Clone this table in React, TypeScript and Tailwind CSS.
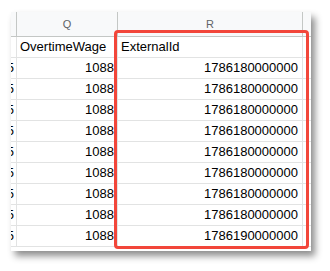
import React from 'react';

const rows = [
  '1786180000000',
  '1786180000000',
  '1786180000000',
  '1786180000000',
  '1786180000000',
  '1786180000000',
  '1786180000000',
  '1786180000000',
  '1786190000000',
];

const cell = 'border-r border-b border-[#e2e3e3] h-[21px] flex items-center overflow-hidden';

const App = () => {
  return (
    <div className="w-[330px] h-[271px] bg-white pl-[11px] pt-[12px] font-['Liberation_Sans',Arial,sans-serif]">
      <div className="relative w-[300px] h-[239px] bg-white shadow-[4px_5px_7px_rgba(0,0,0,0.45)]">
        <div className="w-full h-full overflow-hidden grid grid-cols-[6px_101px_185px_9px] auto-rows-min">
          {/* column letters */}
          <div className="h-[25px] bg-[#f8f9fa] border-r border-b border-[#c4c7c5]"></div>
          <div className="h-[25px] bg-[#f8f9fa] border-r border-b border-[#c4c7c5] flex items-center justify-center text-[11px] text-[#5f6368]">Q</div>
          <div className="h-[25px] bg-[#f8f9fa] border-r border-b border-[#c4c7c5] flex items-center justify-center text-[11px] text-[#5f6368]">R</div>
          <div className="h-[25px] bg-[#f8f9fa] border-b border-[#c4c7c5]"></div>

          {/* field names */}
          <div className={cell}></div>
          <div className={`${cell} pl-[3px] text-[13px] text-black`}>OvertimeWage</div>
          <div className={`${cell} pl-[3px] text-[13px] text-black`}>ExternalId</div>
          <div className={cell}></div>

          {rows.map((id, i) => (
            <React.Fragment key={i}>
              <div className={`${cell} justify-end pr-[2px] text-[13px] text-black`}>
                <span className="shrink-0">5</span>
              </div>
              <div className={`${cell} justify-end pr-[3px] text-[13px] text-black`}>1088</div>
              <div className={`${cell} justify-end pr-[4px] text-[13px] text-black`}>{id}</div>
              <div className={cell}></div>
            </React.Fragment>
          ))}
        </div>

        {/* highlight box */}
        <div className="absolute left-[103px] top-[18px] w-[195px] h-[219px] border-[3px] border-[#f2463a] rounded-[4px]"></div>
      </div>
    </div>
  );
};

export default App;
